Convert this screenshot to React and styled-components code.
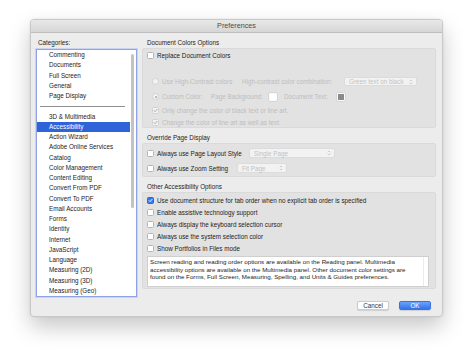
import React from 'react';
import styled, { createGlobalStyle } from 'styled-components';

const GlobalStyle = createGlobalStyle`
  * { box-sizing: border-box; }
  body {
    margin: 0;
    background: #ffffff;
    font-family: "Liberation Sans", Arial, sans-serif;
  }
`;

const Page = styled.div`
  width: 474px;
  height: 358px;
  padding: 19px 0 0 30px;
`;

const Window = styled.div`
  width: 413px;
  height: 298px;
  background: #ececec;
  border: 1px solid #c8c8c8;
  border-radius: 4px;
  box-shadow: 0 10px 22px rgba(0, 0, 0, 0.22), 0 0 3px rgba(0, 0, 0, 0.08);
  display: flex;
  flex-direction: column;
  overflow: hidden;
  font-size: 6.3px;
  color: #1c1c1c;
`;

const TitleBar = styled.div`
  height: 13px;
  flex: none;
  background: linear-gradient(#e8e8e8, #d6d6d6);
  border-bottom: 1px solid #bfbfbf;
  text-align: center;
  font-size: 7.2px;
  line-height: 12px;
  color: #4a4a4a;
`;

const Main = styled.div`
  display: flex;
  gap: 5px;
  padding: 5px 6px 0 5px;
`;

const LeftCol = styled.div`
  width: 101px;
  display: flex;
  flex-direction: column;
`;

const RightCol = styled.div`
  width: 294px;
  display: flex;
  flex-direction: column;
  gap: 5px;
`;

const Label = styled.div`
  height: 10px;
  line-height: 10px;
  padding-left: ${({ $indent }) => $indent || 2}px;
  white-space: nowrap;
`;

const List = styled.div`
  position: relative;
  margin-top: 1px;
  height: 248px;
  background: #ffffff;
  border: 1px solid #8da3e6;
  box-shadow: 0 0 0 1px #c9d3f3;
  overflow: hidden;
`;

const Item = styled.div`
  height: 10.25px;
  line-height: 10.25px;
  padding-left: 12px;
  margin-right: 6px;
  white-space: nowrap;
  background: ${({ $selected }) => ($selected ? '#2f63d8' : 'transparent')};
  color: ${({ $selected }) => ($selected ? '#ffffff' : '#1c1c1c')};
`;

const Separator = styled.div`
  height: 10.25px;
  display: flex;
  align-items: center;
  padding: 0 11px 0 3px;
  &::after {
    content: '';
    flex: 1;
    height: 1px;
    background: #8f8f8f;
  }
`;

const Thumb = styled.div`
  position: absolute;
  right: 2px;
  top: 4px;
  width: 3px;
  height: 154px;
  border-radius: 2px;
  background: #c3c3c3;
`;

const Group = styled.div`
  height: ${({ $h }) => $h}px;
  background: #e2e2e2;
  border: 1px solid #dadada;
  border-radius: 2px;
  padding-top: ${({ $pt }) => $pt || 0}px;
  display: flex;
  flex-direction: column;
`;

const Row = styled.div`
  display: flex;
  align-items: center;
  height: ${({ $h }) => $h || 11}px;
  margin-top: ${({ $mt }) => $mt || 0}px;
  padding-left: ${({ $indent }) => $indent || 4}px;
  white-space: nowrap;
  color: ${({ $disabled }) => ($disabled ? '#bdbdbd' : '#1c1c1c')};
`;

const Cell = styled.div`
  width: ${({ $w }) => $w}px;
  flex: none;
  display: flex;
  align-items: center;
  gap: 3px;
`;

const Box = styled.span`
  width: 7px;
  height: 7px;
  flex: none;
  border-radius: 1.5px;
  display: inline-flex;
  align-items: center;
  justify-content: center;
  background: ${({ $on, $disabled }) => ($on && !$disabled ? '#3a78ee' : $disabled ? '#f3f3f3' : '#ffffff')};
  border: 1px solid ${({ $on, $disabled }) => ($on && !$disabled ? '#2f66d6' : $disabled ? '#d2d2d2' : '#b4b4b4')};
`;

const Radio = styled.span`
  width: 7px;
  height: 7px;
  flex: none;
  border-radius: 50%;
  background: #f3f3f3;
  border: 1px solid #d2d2d2;
  display: inline-flex;
  align-items: center;
  justify-content: center;
  &::after {
    content: '';
    width: 2px;
    height: 2px;
    border-radius: 50%;
    background: ${({ $on }) => ($on ? '#a8a8a8' : 'transparent')};
  }
`;

const Swatch = styled.span`
  width: 10px;
  height: 10px;
  flex: none;
  background: #fafafa;
  border: 1px solid #d6d6d6;
  border-radius: 2px;
  display: inline-flex;
  align-items: center;
  justify-content: center;
  &::after {
    content: '';
    width: 6px;
    height: 6px;
    background: ${({ $fill }) => $fill};
  }
`;

const Select = styled.div`
  width: ${({ $w }) => $w}px;
  height: ${({ $hh }) => $hh || 9}px;
  flex: none;
  display: flex;
  align-items: center;
  justify-content: space-between;
  padding: 0 3px 0 4px;
  background: #f2f2f2;
  border: 1px solid #dcdcdc;
  border-radius: 2px;
  color: #c2c2c2;
`;

const TextArea = styled.div`
  height: 31px;
  margin: 2px 6px 0 4px;
  background: #ffffff;
  border: 1px solid #cfcfcf;
  display: flex;
`;

const TextBody = styled.div`
  flex: 1;
  padding: 1px 2px;
  font-size: 6.2px;
  line-height: 7.5px;
  color: #1c1c1c;
`;

const TextScroll = styled.div`
  width: 5px;
  border-left: 1px solid #ececec;
`;

const Footer = styled.div`
  display: flex;
  justify-content: flex-end;
  gap: 10px;
  padding: 4px 11px 0 0;
`;

const Button = styled.div`
  width: 32px;
  height: 9px;
  border-radius: 2px;
  text-align: center;
  line-height: 8px;
  font-size: 6.3px;
  background: ${({ $primary }) => ($primary ? 'linear-gradient(#6aa3fb, #3473ea)' : '#ffffff')};
  color: ${({ $primary }) => ($primary ? '#ffffff' : '#333333')};
  border: 1px solid ${({ $primary }) => ($primary ? '#3a72df' : '#cccccc')};
  box-shadow: 0 0.5px 1px rgba(0, 0, 0, 0.12);
`;

const Check = ({ on, disabled }) => (
  <Box $on={on} $disabled={disabled}>
    {on && (
      <svg width="5" height="5" viewBox="0 0 10 10">
        <path d="M2 5.2 L4.2 7.4 L8.2 2.6" fill="none" stroke={disabled ? '#a3a3a3' : '#ffffff'} strokeWidth="1.8" strokeLinecap="round" strokeLinejoin="round" />
      </svg>
    )}
  </Box>
);

const Updown = () => (
  <svg width="4" height="6" viewBox="0 0 8 12">
    <path d="M1.5 4.5 L4 2 L6.5 4.5 M1.5 7.5 L4 10 L6.5 7.5" fill="none" stroke="#b5b5b5" strokeWidth="1.2" />
  </svg>
);

const topItems = ['Commenting', 'Documents', 'Full Screen', 'General', 'Page Display'];
const items = [
  '3D & Multimedia', 'Accessibility', 'Action Wizard', 'Adobe Online Services', 'Catalog',
  'Color Management', 'Content Editing', 'Convert From PDF', 'Convert To PDF', 'Email Accounts',
  'Forms', 'Identity', 'Internet', 'JavaScript', 'Language', 'Measuring (2D)', 'Measuring (3D)',
  'Measuring (Geo)',
];

const otherOptions = [
  { text: 'Use document structure for tab order when no explicit tab order is specified', on: true },
  { text: 'Enable assistive technology support' },
  { text: 'Always display the keyboard selection cursor' },
  { text: 'Always use the system selection color' },
  { text: 'Show Portfolios in Files mode' },
];

export default function App() {
  return (
    <Page>
      <GlobalStyle />
      <Window>
        <TitleBar>Preferences</TitleBar>
        <Main>
          <LeftCol>
            <Label>Categories:</Label>
            <List>
              {topItems.map((name) => (
                <Item key={name}>{name}</Item>
              ))}
              <Separator />
              {items.map((name) => (
                <Item key={name} $selected={name === 'Accessibility'}>{name}</Item>
              ))}
              <Thumb />
            </List>
          </LeftCol>

          <RightCol>
            <div>
              <Label $indent={5}>Document Colors Options</Label>
              <Group $h={80} $pt={1}>
                <Row $indent={4}>
                  <Cell $w={200}><Check />Replace Document Colors</Cell>
                </Row>
                <Row $mt={15} $indent={9} $disabled>
                  <Cell $w={90}><Radio />Use High-Contrast colors</Cell>
                  <Cell $w={102}>High-contrast color combination:</Cell>
                  <Select $w={73}>Green text on black<Updown /></Select>
                </Row>
                <Row $mt={4} $indent={9} $disabled>
                  <Cell $w={59}><Radio $on />Custom Color:</Cell>
                  <Cell $w={57}>Page Background:</Cell>
                  <Cell $w={16}><Swatch $fill="#ffffff" /></Cell>
                  <Cell $w={52}>Document Text:</Cell>
                  <Swatch $fill="#8a8a8a" />
                </Row>
                <Row $h={10} $mt={3} $indent={9} $disabled>
                  <Cell $w={250}><Check on disabled />Only change the color of black text or line art.</Cell>
                </Row>
                <Row $h={10} $mt={2} $indent={9} $disabled>
                  <Cell $w={250}><Check on disabled />Change the color of line art as well as text.</Cell>
                </Row>
              </Group>
            </div>

            <div>
              <Label $indent={5}>Override Page Display</Label>
              <Group $h={34} $pt={4}>
                <Row $h={10} $indent={4}>
                  <Cell $w={102}><Check />Always use Page Layout Style</Cell>
                  <Select $w={86} $hh={10}>Single Page<Updown /></Select>
                </Row>
                <Row $h={10} $mt={5} $indent={4}>
                  <Cell $w={90}><Check />Always use Zoom Setting</Cell>
                  <Select $w={50} $hh={10}>Fit Page<Updown /></Select>
                </Row>
              </Group>
            </div>

            <div>
              <Label $indent={5}>Other Accessibility Options</Label>
              <Group $h={97} $pt={1}>
                {otherOptions.map((opt) => (
                  <Row key={opt.text} $h={12} $indent={4}>
                    <Cell $w={280}><Check on={opt.on} />{opt.text}</Cell>
                  </Row>
                ))}
                <TextArea>
                  <TextBody>
                    Screen reading and reading order options are available on the Reading panel. Multimedia
                    accessibility options are available on the Multimedia panel. Other document color settings are
                    found on the Forms, Full Screen, Measuring, Spelling, and Units &amp; Guides preferences.
                  </TextBody>
                  <TextScroll />
                </TextArea>
              </Group>
            </div>
          </RightCol>
        </Main>
        <Footer>
          <Button>Cancel</Button>
          <Button $primary>OK</Button>
        </Footer>
      </Window>
    </Page>
  );
}
